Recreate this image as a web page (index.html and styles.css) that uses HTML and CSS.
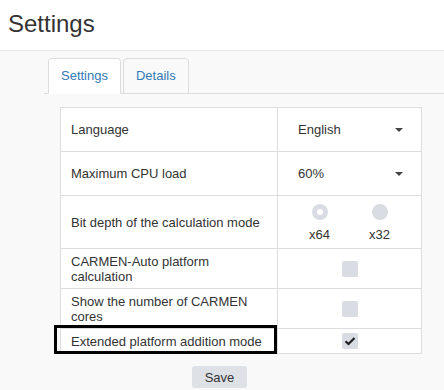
FILE: index.html
```html
<!DOCTYPE html>
<html lang="en">
<head>
  <meta charset="UTF-8" />
  <title>Settings</title>
  <link rel="stylesheet" href="styles.css">
</head>
<body>
  <header class="page-header">
    <h1>Settings</h1>
  </header>

  <main class="page-body">
    <ul class="tabs">
      <li class="tab active">Settings</li>
      <li class="tab">Details</li>
    </ul>

    <div class="table-wrap">
      <table class="settings-table">
        <tr class="row-select">
          <td class="label">Language</td>
          <td class="value">
            <div class="select"><span>English</span><span class="caret"></span></div>
          </td>
        </tr>
        <tr class="row-select">
          <td class="label">Maximum CPU load</td>
          <td class="value">
            <div class="select"><span>60%</span><span class="caret"></span></div>
          </td>
        </tr>
        <tr class="row-radio">
          <td class="label">Bit depth of the calculation mode</td>
          <td class="value">
            <div class="radios">
              <label class="radio-item"><span class="radio checked"></span>x64</label>
              <label class="radio-item"><span class="radio"></span>x32</label>
            </div>
          </td>
        </tr>
        <tr class="row-check">
          <td class="label">CARMEN-Auto platform<br>calculation</td>
          <td class="value center"><span class="checkbox"></span></td>
        </tr>
        <tr class="row-check">
          <td class="label">Show the number of CARMEN<br>cores</td>
          <td class="value center"><span class="checkbox"></span></td>
        </tr>
        <tr class="row-small">
          <td class="label">Extended platform addition mode</td>
          <td class="value center">
            <span class="checkbox">
              <svg width="12" height="10" viewBox="0 0 12 10"><path d="M1.5 5.2 L4.5 8 L10.5 2" fill="none" stroke="#222" stroke-width="2.2"/></svg>
            </span>
          </td>
        </tr>
      </table>
      <div class="highlight"></div>
    </div>

    <div class="actions">
      <button class="btn">Save</button>
    </div>
  </main>
</body>
</html>
```

FILE: styles.css
```css
/* Base */
* {
  margin: 0;
  padding: 0;
  box-sizing: border-box;
}
body {
  font-family: 'Liberation Sans', Arial, sans-serif;
  font-size: 13px;
  color: #333;
  background: #f9f9f9;
  width: 444px;
  height: 390px;
  overflow: hidden;
}
/* Header */
.page-header {
  background: #fff;
  height: 51px;
  border-bottom: 1px solid #e7e7e7;
  padding: 10px 8px 0;
}
.page-header h1 {
  font-size: 24px;
  font-weight: normal;
  line-height: 28px;
  color: #333;
}
/* Tabs */
.page-body {
  padding: 7px 0 0 44px;
}
.tabs {
  list-style: none;
  display: flex;
  padding-left: 4px;
  border-bottom: 1px solid #ddd;
  height: 36px;
}
.tab {
  height: 36px;
  padding: 0 12px;
  margin-right: 2px;
  line-height: 34px;
  color: #337ab7;
  border: 1px solid #ddd;
  border-radius: 4px 4px 0 0;
  background: #f9f9f9;
}
.tab.active {
  background: #fff;
  border-bottom-color: #fff;
}
/* Table */
.table-wrap {
  position: relative;
  margin: 13px 0 0 16px;
  width: 362px;
}
.settings-table {
  width: 362px;
  border-collapse: collapse;
  background: #fff;
}
.settings-table td {
  border: 1px solid #ddd;
  padding: 0 10px;
  line-height: 15px;
}
.settings-table td.label {
  width: 217px;
}
.row-select { height: 44px; }
.row-radio { height: 53px; }
.row-check { height: 40px; }
.row-small { height: 25px; }
.value.center {
  text-align: center;
}
/* Select */
.select {
  display: flex;
  justify-content: space-between;
  align-items: center;
  padding: 0 8px 0 10px;
}
.caret {
  width: 0;
  height: 0;
  border-left: 4px solid transparent;
  border-right: 4px solid transparent;
  border-top: 4px solid #444;
}
/* Radios */
.radios {
  display: flex;
  justify-content: center;
  gap: 30px;
  padding-top: 2px;
}
.radio-item {
  display: flex;
  flex-direction: column;
  align-items: center;
  gap: 7px;
  width: 30px;
}
.radio {
  width: 16px;
  height: 16px;
  border-radius: 50%;
  background: #d9dde3;
  position: relative;
}
.radio.checked::after {
  content: "";
  position: absolute;
  left: 5px;
  top: 5px;
  width: 6px;
  height: 6px;
  border-radius: 50%;
  background: #fff;
}
/* Checkbox */
.checkbox {
  display: inline-flex;
  align-items: center;
  justify-content: center;
  width: 16px;
  height: 16px;
  border-radius: 2px;
  background: #d9dde3;
  vertical-align: middle;
}
/* Annotation box */
.highlight {
  position: absolute;
  left: -6px;
  bottom: 0;
  width: 223px;
  height: 29px;
  border: 3px solid #000;
}
/* Save */
.actions {
  text-align: center;
  padding: 12px 0 0;
  margin-left: -49px;
}
.btn {
  font-family: inherit;
  font-size: 13px;
  color: #333;
  background: #dee2e7;
  border: none;
  border-radius: 3px;
  width: 55px;
  height: 22px;
}
```
